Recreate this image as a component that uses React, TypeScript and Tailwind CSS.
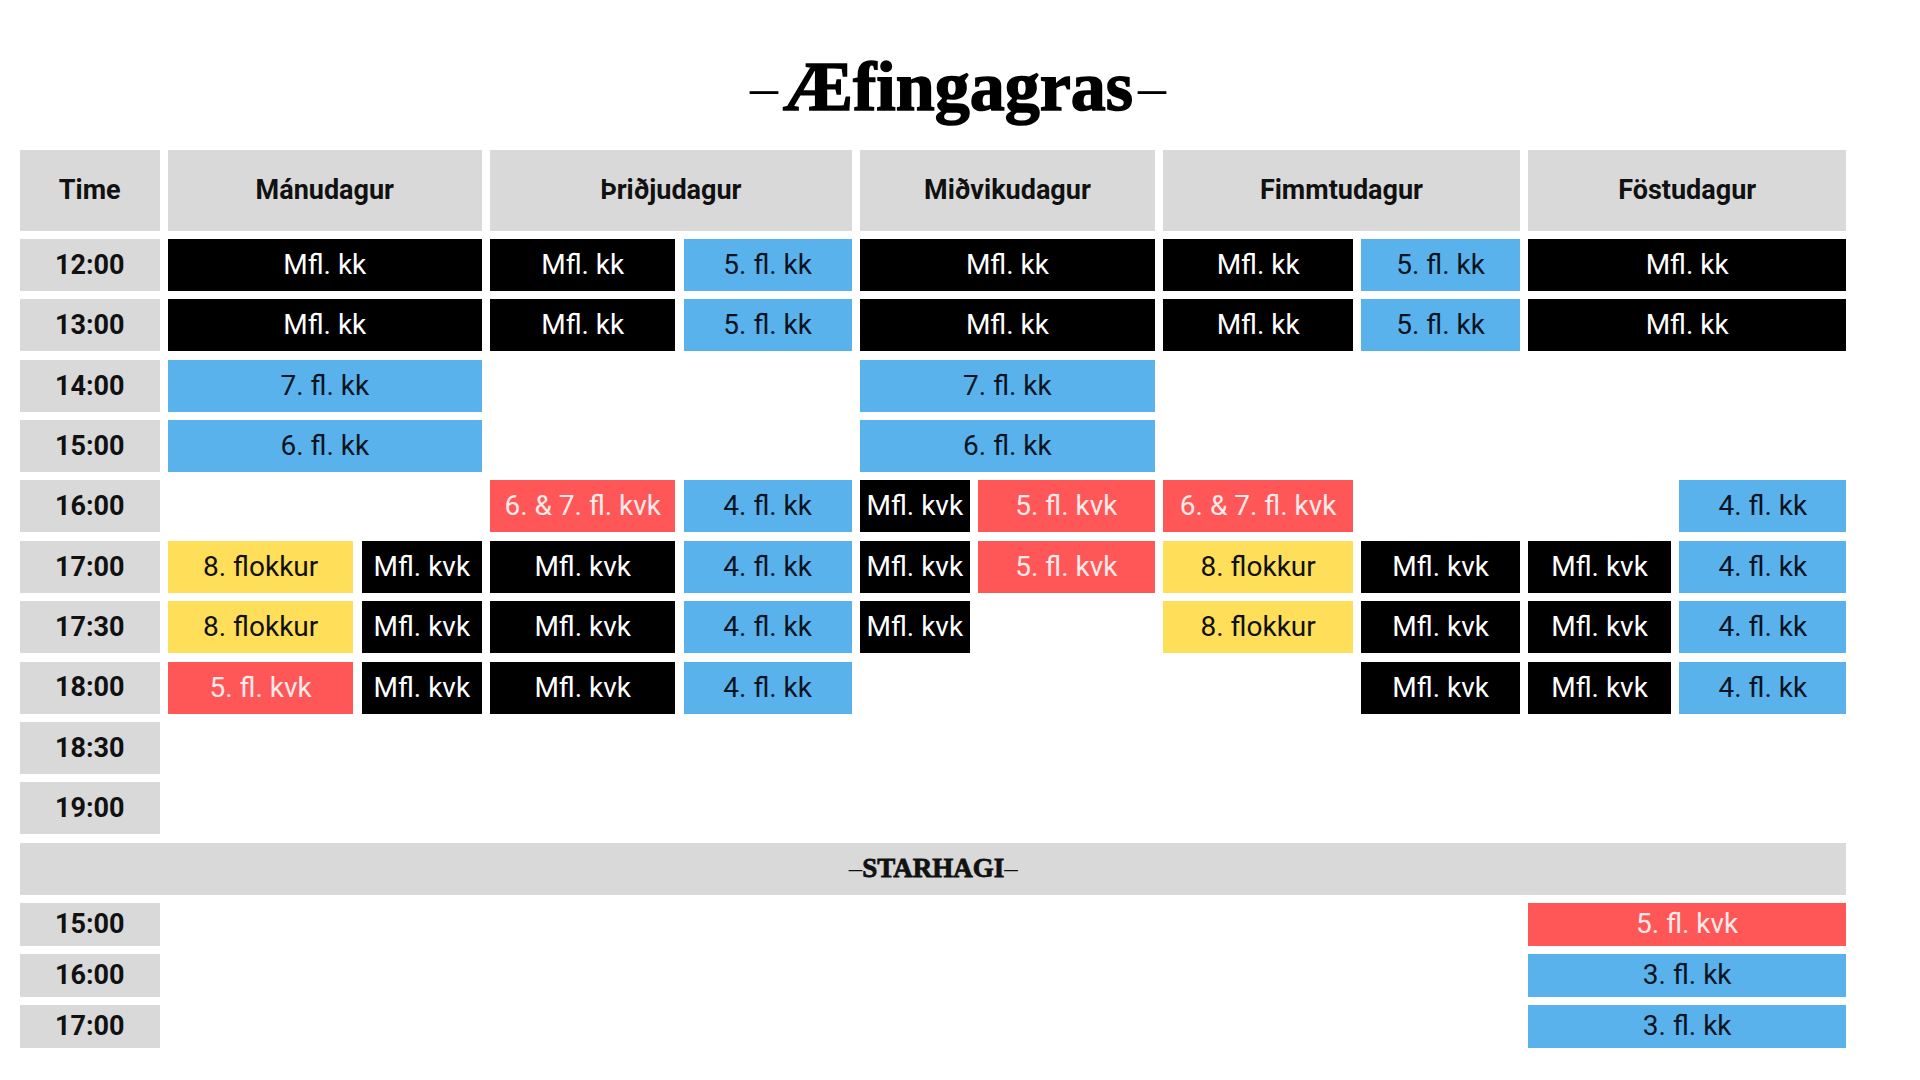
import React from "react";

type Cell = { text: string; cls: string; pos: string };

const BLACK = "bg-black text-white";
const BLUE = "bg-[#5ab2ec] text-[#0b1422]";
const RED = "bg-[#ff5757] text-[#fdeaea]";
const YELLOW = "bg-[#ffde59] text-[#111111]";

const cells: Cell[] = [
  // 12:00
  { text: "Mfl. kk", cls: BLACK, pos: "col-start-2 col-span-2 row-start-2" },
  { text: "Mfl. kk", cls: BLACK, pos: "col-start-4 row-start-2" },
  { text: "5. fl. kk", cls: BLUE, pos: "col-start-5 row-start-2" },
  { text: "Mfl. kk", cls: BLACK, pos: "col-start-6 col-span-2 row-start-2" },
  { text: "Mfl. kk", cls: BLACK, pos: "col-start-8 row-start-2" },
  { text: "5. fl. kk", cls: BLUE, pos: "col-start-9 row-start-2" },
  { text: "Mfl. kk", cls: BLACK, pos: "col-start-10 col-span-2 row-start-2" },
  // 13:00
  { text: "Mfl. kk", cls: BLACK, pos: "col-start-2 col-span-2 row-start-3" },
  { text: "Mfl. kk", cls: BLACK, pos: "col-start-4 row-start-3" },
  { text: "5. fl. kk", cls: BLUE, pos: "col-start-5 row-start-3" },
  { text: "Mfl. kk", cls: BLACK, pos: "col-start-6 col-span-2 row-start-3" },
  { text: "Mfl. kk", cls: BLACK, pos: "col-start-8 row-start-3" },
  { text: "5. fl. kk", cls: BLUE, pos: "col-start-9 row-start-3" },
  { text: "Mfl. kk", cls: BLACK, pos: "col-start-10 col-span-2 row-start-3" },
  // 14:00
  { text: "7. fl. kk", cls: BLUE, pos: "col-start-2 col-span-2 row-start-4" },
  { text: "7. fl. kk", cls: BLUE, pos: "col-start-6 col-span-2 row-start-4" },
  // 15:00
  { text: "6. fl. kk", cls: BLUE, pos: "col-start-2 col-span-2 row-start-5" },
  { text: "6. fl. kk", cls: BLUE, pos: "col-start-6 col-span-2 row-start-5" },
  // 16:00
  { text: "6. & 7. fl. kvk", cls: RED, pos: "col-start-4 row-start-6" },
  { text: "4. fl. kk", cls: BLUE, pos: "col-start-5 row-start-6" },
  { text: "Mfl. kvk", cls: BLACK, pos: "col-start-6 row-start-6" },
  { text: "5. fl. kvk", cls: RED, pos: "col-start-7 row-start-6" },
  { text: "6. & 7. fl. kvk", cls: RED, pos: "col-start-8 row-start-6" },
  { text: "4. fl. kk", cls: BLUE, pos: "col-start-11 row-start-6" },
  // 17:00
  { text: "8. flokkur", cls: YELLOW, pos: "col-start-2 row-start-7" },
  { text: "Mfl. kvk", cls: BLACK, pos: "col-start-3 row-start-7" },
  { text: "Mfl. kvk", cls: BLACK, pos: "col-start-4 row-start-7" },
  { text: "4. fl. kk", cls: BLUE, pos: "col-start-5 row-start-7" },
  { text: "Mfl. kvk", cls: BLACK, pos: "col-start-6 row-start-7" },
  { text: "5. fl. kvk", cls: RED, pos: "col-start-7 row-start-7" },
  { text: "8. flokkur", cls: YELLOW, pos: "col-start-8 row-start-7" },
  { text: "Mfl. kvk", cls: BLACK, pos: "col-start-9 row-start-7" },
  { text: "Mfl. kvk", cls: BLACK, pos: "col-start-10 row-start-7" },
  { text: "4. fl. kk", cls: BLUE, pos: "col-start-11 row-start-7" },
  // 17:30
  { text: "8. flokkur", cls: YELLOW, pos: "col-start-2 row-start-8" },
  { text: "Mfl. kvk", cls: BLACK, pos: "col-start-3 row-start-8" },
  { text: "Mfl. kvk", cls: BLACK, pos: "col-start-4 row-start-8" },
  { text: "4. fl. kk", cls: BLUE, pos: "col-start-5 row-start-8" },
  { text: "Mfl. kvk", cls: BLACK, pos: "col-start-6 row-start-8" },
  { text: "8. flokkur", cls: YELLOW, pos: "col-start-8 row-start-8" },
  { text: "Mfl. kvk", cls: BLACK, pos: "col-start-9 row-start-8" },
  { text: "Mfl. kvk", cls: BLACK, pos: "col-start-10 row-start-8" },
  { text: "4. fl. kk", cls: BLUE, pos: "col-start-11 row-start-8" },
  // 18:00
  { text: "5. fl. kvk", cls: RED, pos: "col-start-2 row-start-9" },
  { text: "Mfl. kvk", cls: BLACK, pos: "col-start-3 row-start-9" },
  { text: "Mfl. kvk", cls: BLACK, pos: "col-start-4 row-start-9" },
  { text: "4. fl. kk", cls: BLUE, pos: "col-start-5 row-start-9" },
  { text: "Mfl. kvk", cls: BLACK, pos: "col-start-9 row-start-9" },
  { text: "Mfl. kvk", cls: BLACK, pos: "col-start-10 row-start-9" },
  { text: "4. fl. kk", cls: BLUE, pos: "col-start-11 row-start-9" },
  // Starhagi
  { text: "5. fl. kvk", cls: RED, pos: "col-start-10 col-span-2 row-start-13" },
  { text: "3. fl. kk", cls: BLUE, pos: "col-start-10 col-span-2 row-start-14" },
  { text: "3. fl. kk", cls: BLUE, pos: "col-start-10 col-span-2 row-start-15" },
];

const headers: { text: string; pos: string }[] = [
  { text: "Time", pos: "col-start-1 row-start-1" },
  { text: "Mánudagur", pos: "col-start-2 col-span-2 row-start-1" },
  { text: "Þriðjudagur", pos: "col-start-4 col-span-2 row-start-1" },
  { text: "Miðvikudagur", pos: "col-start-6 col-span-2 row-start-1" },
  { text: "Fimmtudagur", pos: "col-start-8 col-span-2 row-start-1" },
  { text: "Föstudagur", pos: "col-start-10 col-span-2 row-start-1" },
];

const times: { text: string; pos: string }[] = [
  { text: "12:00", pos: "col-start-1 row-start-2" },
  { text: "13:00", pos: "col-start-1 row-start-3" },
  { text: "14:00", pos: "col-start-1 row-start-4" },
  { text: "15:00", pos: "col-start-1 row-start-5" },
  { text: "16:00", pos: "col-start-1 row-start-6" },
  { text: "17:00", pos: "col-start-1 row-start-7" },
  { text: "17:30", pos: "col-start-1 row-start-8" },
  { text: "18:00", pos: "col-start-1 row-start-9" },
  { text: "18:30", pos: "col-start-1 row-start-10" },
  { text: "19:00", pos: "col-start-1 row-start-11" },
  { text: "15:00", pos: "col-start-1 row-start-13" },
  { text: "16:00", pos: "col-start-1 row-start-14" },
  { text: "17:00", pos: "col-start-1 row-start-15" },
];

export default function App() {
  return (
    <div className="w-[1920px] h-[1080px] bg-white overflow-hidden pl-[20px] pt-[52px] font-['Roboto',sans-serif]">
      <div className="w-[1826px] h-[70px] pl-[50px] flex items-baseline justify-center gap-[5px] text-[70px] leading-[70px] font-bold text-black font-['Liberation_Serif',serif] mb-[28px] whitespace-nowrap">
        <span className="font-normal text-[56px] align-[3px] relative -top-[4px]">–</span>
        <span className="[-webkit-text-stroke:1.5px_black]">Æfingagras</span>
        <span className="font-normal text-[56px] relative -top-[4px]">–</span>
      </div>
      <div className="grid w-[1826px] grid-cols-[139.5px_185.7px_120px_185.3px_168px_109.6px_177px_190px_158.3px_143px_167px] grid-rows-[80.7px_repeat(11,52px)_repeat(3,42.7px)] gap-x-[8.3px] gap-y-[8.37px]">
        {headers.map((h, i) => (
          <div
            key={"h" + i}
            className={`${h.pos} bg-[#d9d9d9] flex items-center justify-center text-[27px] font-bold text-[#111111] whitespace-nowrap`}
          >
            {h.text}
          </div>
        ))}
        {times.map((t, i) => (
          <div
            key={"t" + i}
            className={`${t.pos} bg-[#d9d9d9] flex items-center justify-center text-[27px] font-bold text-[#111111] whitespace-nowrap`}
          >
            {t.text}
          </div>
        ))}
        <div className="col-start-1 col-span-11 row-start-12 bg-[#d9d9d9] flex items-center justify-center text-[27px] font-bold text-[#111111] font-['Liberation_Serif',serif] whitespace-nowrap">
          <span className="font-normal">–</span>
          <span className="[-webkit-text-stroke:0.8px_#111111]">STARHAGI</span>
          <span className="font-normal">–</span>
        </div>
        {cells.map((c, i) => (
          <div
            key={"c" + i}
            className={`${c.pos} ${c.cls} flex items-center justify-center text-[28px] font-normal whitespace-nowrap overflow-hidden`}
          >
            {c.text}
          </div>
        ))}
      </div>
    </div>
  );
}
